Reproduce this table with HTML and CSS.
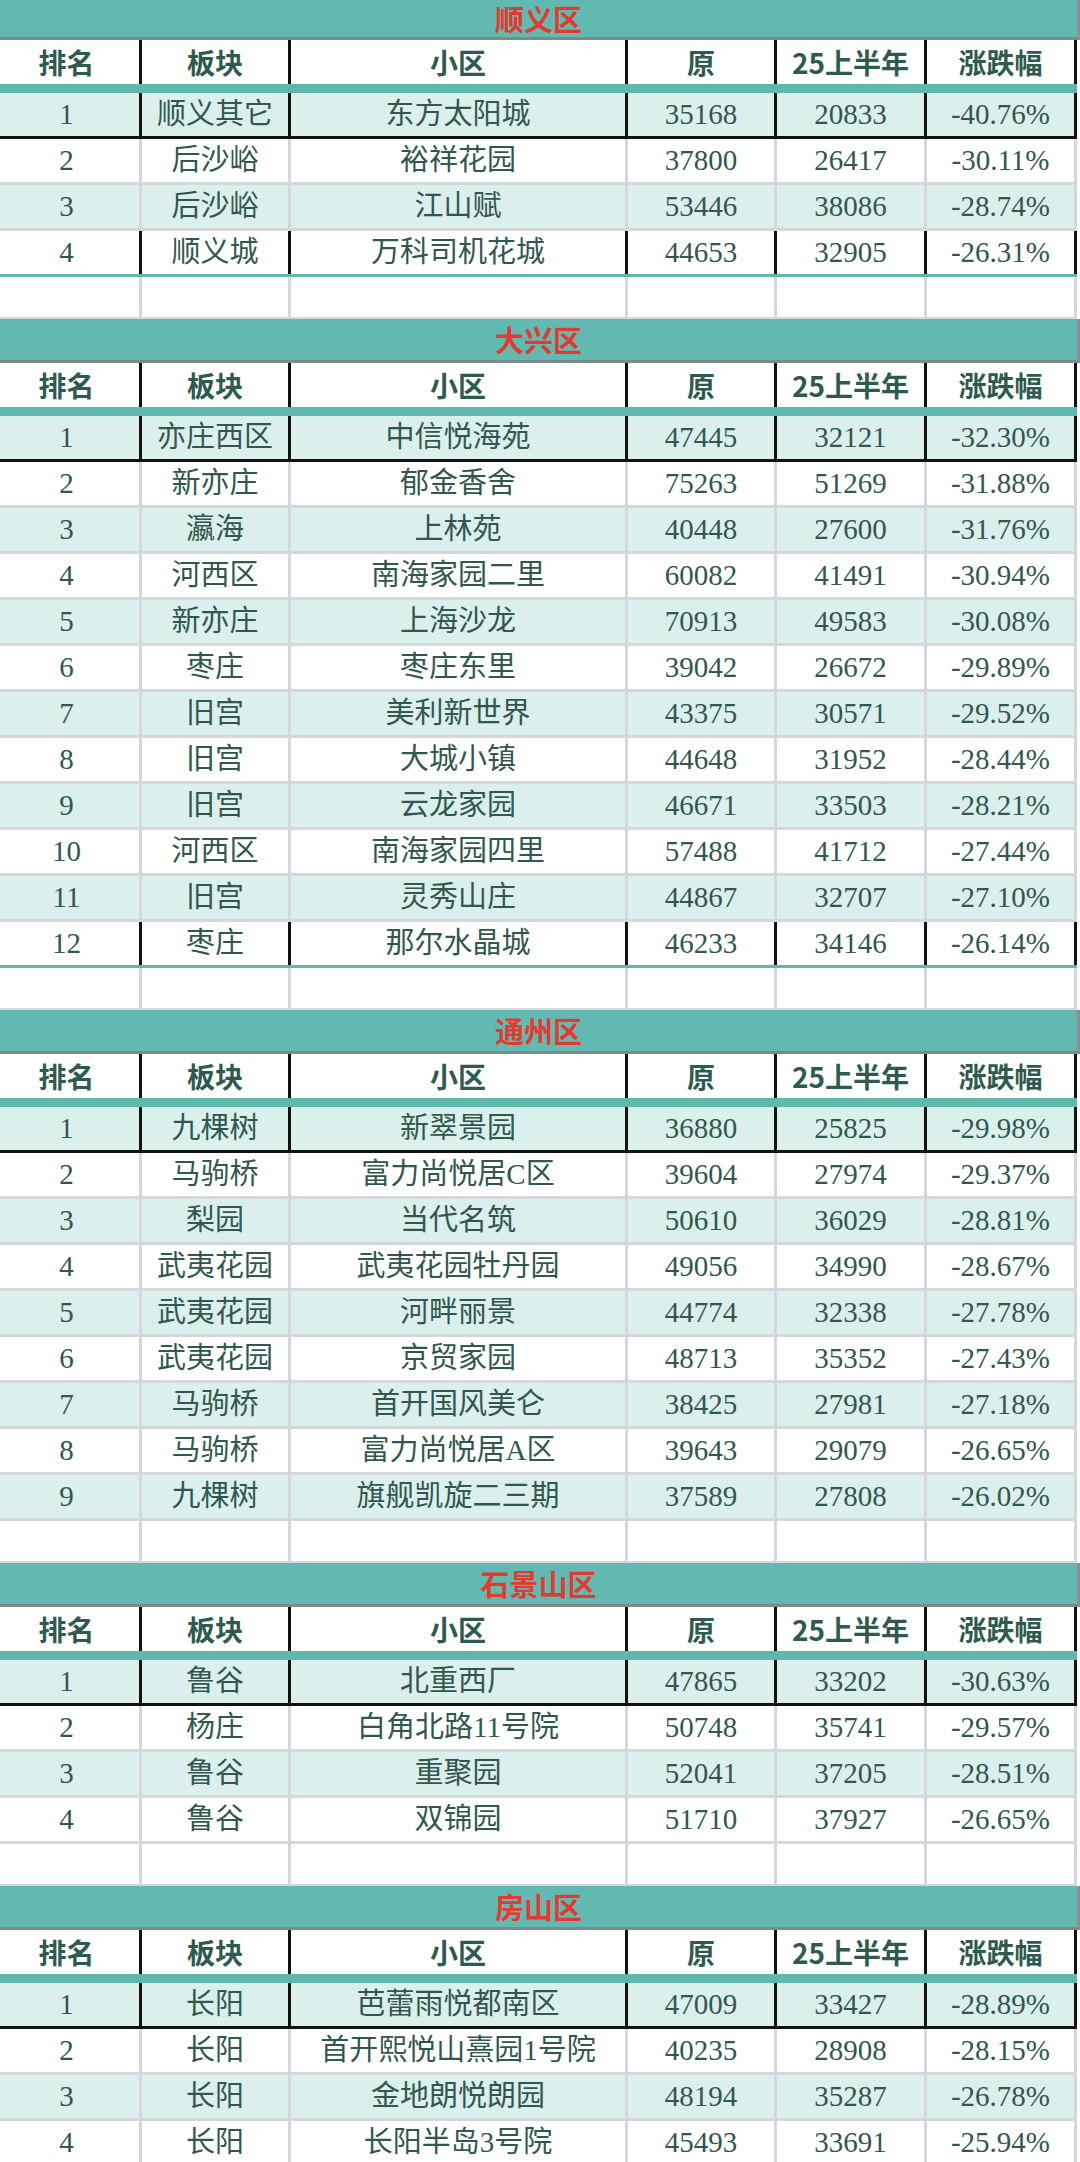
FILE: index.html
```html
<!DOCTYPE html>
<html lang="zh-CN">
<head>
<meta charset="utf-8">
<title>各区小区跌幅排名</title>
<link rel="stylesheet" href="styles.css">
</head>
<body>
<div class="sheet">

<section class="block first">
  <div class="title">顺义区</div>
  <div class="row head"><div class="c">排名</div><div class="c">板块</div><div class="c">小区</div><div class="c">原</div><div class="c">25上半年</div><div class="c">涨跌幅</div></div>
  <div class="row odd r1"><div class="c">1</div><div class="c">顺义其它</div><div class="c">东方太阳城</div><div class="c">35168</div><div class="c">20833</div><div class="c">-40.76%</div></div>
  <div class="row"><div class="c">2</div><div class="c">后沙峪</div><div class="c">裕祥花园</div><div class="c">37800</div><div class="c">26417</div><div class="c">-30.11%</div></div>
  <div class="row odd"><div class="c">3</div><div class="c">后沙峪</div><div class="c">江山赋</div><div class="c">53446</div><div class="c">38086</div><div class="c">-28.74%</div></div>
  <div class="row dark last"><div class="c">4</div><div class="c">顺义城</div><div class="c">万科司机花城</div><div class="c">44653</div><div class="c">32905</div><div class="c">-26.31%</div></div>
  <div class="row blank"><div class="c"></div><div class="c"></div><div class="c"></div><div class="c"></div><div class="c"></div><div class="c"></div></div>
</section>

<section class="block">
  <div class="title">大兴区</div>
  <div class="row head"><div class="c">排名</div><div class="c">板块</div><div class="c">小区</div><div class="c">原</div><div class="c">25上半年</div><div class="c">涨跌幅</div></div>
  <div class="row odd r1"><div class="c">1</div><div class="c">亦庄西区</div><div class="c">中信悦海苑</div><div class="c">47445</div><div class="c">32121</div><div class="c">-32.30%</div></div>
  <div class="row"><div class="c">2</div><div class="c">新亦庄</div><div class="c">郁金香舍</div><div class="c">75263</div><div class="c">51269</div><div class="c">-31.88%</div></div>
  <div class="row odd"><div class="c">3</div><div class="c">瀛海</div><div class="c">上林苑</div><div class="c">40448</div><div class="c">27600</div><div class="c">-31.76%</div></div>
  <div class="row"><div class="c">4</div><div class="c">河西区</div><div class="c">南海家园二里</div><div class="c">60082</div><div class="c">41491</div><div class="c">-30.94%</div></div>
  <div class="row odd"><div class="c">5</div><div class="c">新亦庄</div><div class="c">上海沙龙</div><div class="c">70913</div><div class="c">49583</div><div class="c">-30.08%</div></div>
  <div class="row"><div class="c">6</div><div class="c">枣庄</div><div class="c">枣庄东里</div><div class="c">39042</div><div class="c">26672</div><div class="c">-29.89%</div></div>
  <div class="row odd"><div class="c">7</div><div class="c">旧宫</div><div class="c">美利新世界</div><div class="c">43375</div><div class="c">30571</div><div class="c">-29.52%</div></div>
  <div class="row"><div class="c">8</div><div class="c">旧宫</div><div class="c">大城小镇</div><div class="c">44648</div><div class="c">31952</div><div class="c">-28.44%</div></div>
  <div class="row odd"><div class="c">9</div><div class="c">旧宫</div><div class="c">云龙家园</div><div class="c">46671</div><div class="c">33503</div><div class="c">-28.21%</div></div>
  <div class="row"><div class="c">10</div><div class="c">河西区</div><div class="c">南海家园四里</div><div class="c">57488</div><div class="c">41712</div><div class="c">-27.44%</div></div>
  <div class="row odd"><div class="c">11</div><div class="c">旧宫</div><div class="c">灵秀山庄</div><div class="c">44867</div><div class="c">32707</div><div class="c">-27.10%</div></div>
  <div class="row dark last"><div class="c">12</div><div class="c">枣庄</div><div class="c">那尔水晶城</div><div class="c">46233</div><div class="c">34146</div><div class="c">-26.14%</div></div>
  <div class="row blank"><div class="c"></div><div class="c"></div><div class="c"></div><div class="c"></div><div class="c"></div><div class="c"></div></div>
</section>

<section class="block">
  <div class="title">通州区</div>
  <div class="row head"><div class="c">排名</div><div class="c">板块</div><div class="c">小区</div><div class="c">原</div><div class="c">25上半年</div><div class="c">涨跌幅</div></div>
  <div class="row odd r1"><div class="c">1</div><div class="c">九棵树</div><div class="c">新翠景园</div><div class="c">36880</div><div class="c">25825</div><div class="c">-29.98%</div></div>
  <div class="row"><div class="c">2</div><div class="c">马驹桥</div><div class="c">富力尚悦居C区</div><div class="c">39604</div><div class="c">27974</div><div class="c">-29.37%</div></div>
  <div class="row odd"><div class="c">3</div><div class="c">梨园</div><div class="c">当代名筑</div><div class="c">50610</div><div class="c">36029</div><div class="c">-28.81%</div></div>
  <div class="row"><div class="c">4</div><div class="c">武夷花园</div><div class="c">武夷花园牡丹园</div><div class="c">49056</div><div class="c">34990</div><div class="c">-28.67%</div></div>
  <div class="row odd"><div class="c">5</div><div class="c">武夷花园</div><div class="c">河畔丽景</div><div class="c">44774</div><div class="c">32338</div><div class="c">-27.78%</div></div>
  <div class="row"><div class="c">6</div><div class="c">武夷花园</div><div class="c">京贸家园</div><div class="c">48713</div><div class="c">35352</div><div class="c">-27.43%</div></div>
  <div class="row odd"><div class="c">7</div><div class="c">马驹桥</div><div class="c">首开国风美仑</div><div class="c">38425</div><div class="c">27981</div><div class="c">-27.18%</div></div>
  <div class="row"><div class="c">8</div><div class="c">马驹桥</div><div class="c">富力尚悦居A区</div><div class="c">39643</div><div class="c">29079</div><div class="c">-26.65%</div></div>
  <div class="row odd"><div class="c">9</div><div class="c">九棵树</div><div class="c">旗舰凯旋二三期</div><div class="c">37589</div><div class="c">27808</div><div class="c">-26.02%</div></div>
  <div class="row blank"><div class="c"></div><div class="c"></div><div class="c"></div><div class="c"></div><div class="c"></div><div class="c"></div></div>
</section>

<section class="block">
  <div class="title">石景山区</div>
  <div class="row head"><div class="c">排名</div><div class="c">板块</div><div class="c">小区</div><div class="c">原</div><div class="c">25上半年</div><div class="c">涨跌幅</div></div>
  <div class="row odd r1"><div class="c">1</div><div class="c">鲁谷</div><div class="c">北重西厂</div><div class="c">47865</div><div class="c">33202</div><div class="c">-30.63%</div></div>
  <div class="row"><div class="c">2</div><div class="c">杨庄</div><div class="c">白角北路11号院</div><div class="c">50748</div><div class="c">35741</div><div class="c">-29.57%</div></div>
  <div class="row odd"><div class="c">3</div><div class="c">鲁谷</div><div class="c">重聚园</div><div class="c">52041</div><div class="c">37205</div><div class="c">-28.51%</div></div>
  <div class="row"><div class="c">4</div><div class="c">鲁谷</div><div class="c">双锦园</div><div class="c">51710</div><div class="c">37927</div><div class="c">-26.65%</div></div>
  <div class="row blank"><div class="c"></div><div class="c"></div><div class="c"></div><div class="c"></div><div class="c"></div><div class="c"></div></div>
</section>

<section class="block">
  <div class="title">房山区</div>
  <div class="row head"><div class="c">排名</div><div class="c">板块</div><div class="c">小区</div><div class="c">原</div><div class="c">25上半年</div><div class="c">涨跌幅</div></div>
  <div class="row odd r1"><div class="c">1</div><div class="c">长阳</div><div class="c">芭蕾雨悦都南区</div><div class="c">47009</div><div class="c">33427</div><div class="c">-28.89%</div></div>
  <div class="row"><div class="c">2</div><div class="c">长阳</div><div class="c">首开熙悦山熹园1号院</div><div class="c">40235</div><div class="c">28908</div><div class="c">-28.15%</div></div>
  <div class="row odd"><div class="c">3</div><div class="c">长阳</div><div class="c">金地朗悦朗园</div><div class="c">48194</div><div class="c">35287</div><div class="c">-26.78%</div></div>
  <div class="row"><div class="c">4</div><div class="c">长阳</div><div class="c">长阳半岛3号院</div><div class="c">45493</div><div class="c">33691</div><div class="c">-25.94%</div></div>
</section>

</div>
</body>
</html>
```

FILE: styles.css
```css
html, body {
  margin: 0;
  padding: 0;
  background: #ffffff;
}

.sheet {
  width: 1080px;
  height: 2162px;
  overflow: hidden;
}

.title {
  box-sizing: border-box;
  width: 1080px;
  height: 44px;
  background: #62b9b1;
  border-bottom: 3px solid #7e8a88;
  border-right: 3px solid #8c9291;
  color: #e23a2e;
  font-family: "Noto Sans CJK SC", sans-serif;
  font-weight: 700;
  font-size: 29px;
  line-height: 41px;
  text-align: center;
}

.first .title {
  height: 40px;
  line-height: 37px;
}

.row {
  box-sizing: border-box;
  display: grid;
  grid-template-columns: 142px 149px 337px 149px 150px 150px;
  width: 1077px;
  height: 46px;
  background: #ffffff;
  border-bottom: 3px solid #d6d6de;
  color: #32574e;
  font-family: "Liberation Serif", "Noto Sans CJK SC", serif;
  font-size: 29px;
  line-height: 1;
}

.c {
  box-sizing: border-box;
  display: flex;
  align-items: center;
  justify-content: center;
  white-space: nowrap;
  border-right: 3px solid #d6d6de;
}

.c:first-child {
  padding-right: 6px;
}

.odd {
  background: #dbf0ec;
}

.head {
  height: 53px;
  border-bottom: 9px solid #5fb7ad;
  color: #2e5a50;
  font-family: "Noto Sans CJK SC", sans-serif;
  font-weight: 700;
  font-size: 28px;
}

.head .c,
.r1 .c,
.dark .c {
  border-right-color: #121212;
}

.r1 {
  border-bottom-color: #121212;
}

.last {
  border-bottom-color: #5fb7ad;
}

.blank {
  height: 42px;
  border-bottom-width: 2px;
}
```
